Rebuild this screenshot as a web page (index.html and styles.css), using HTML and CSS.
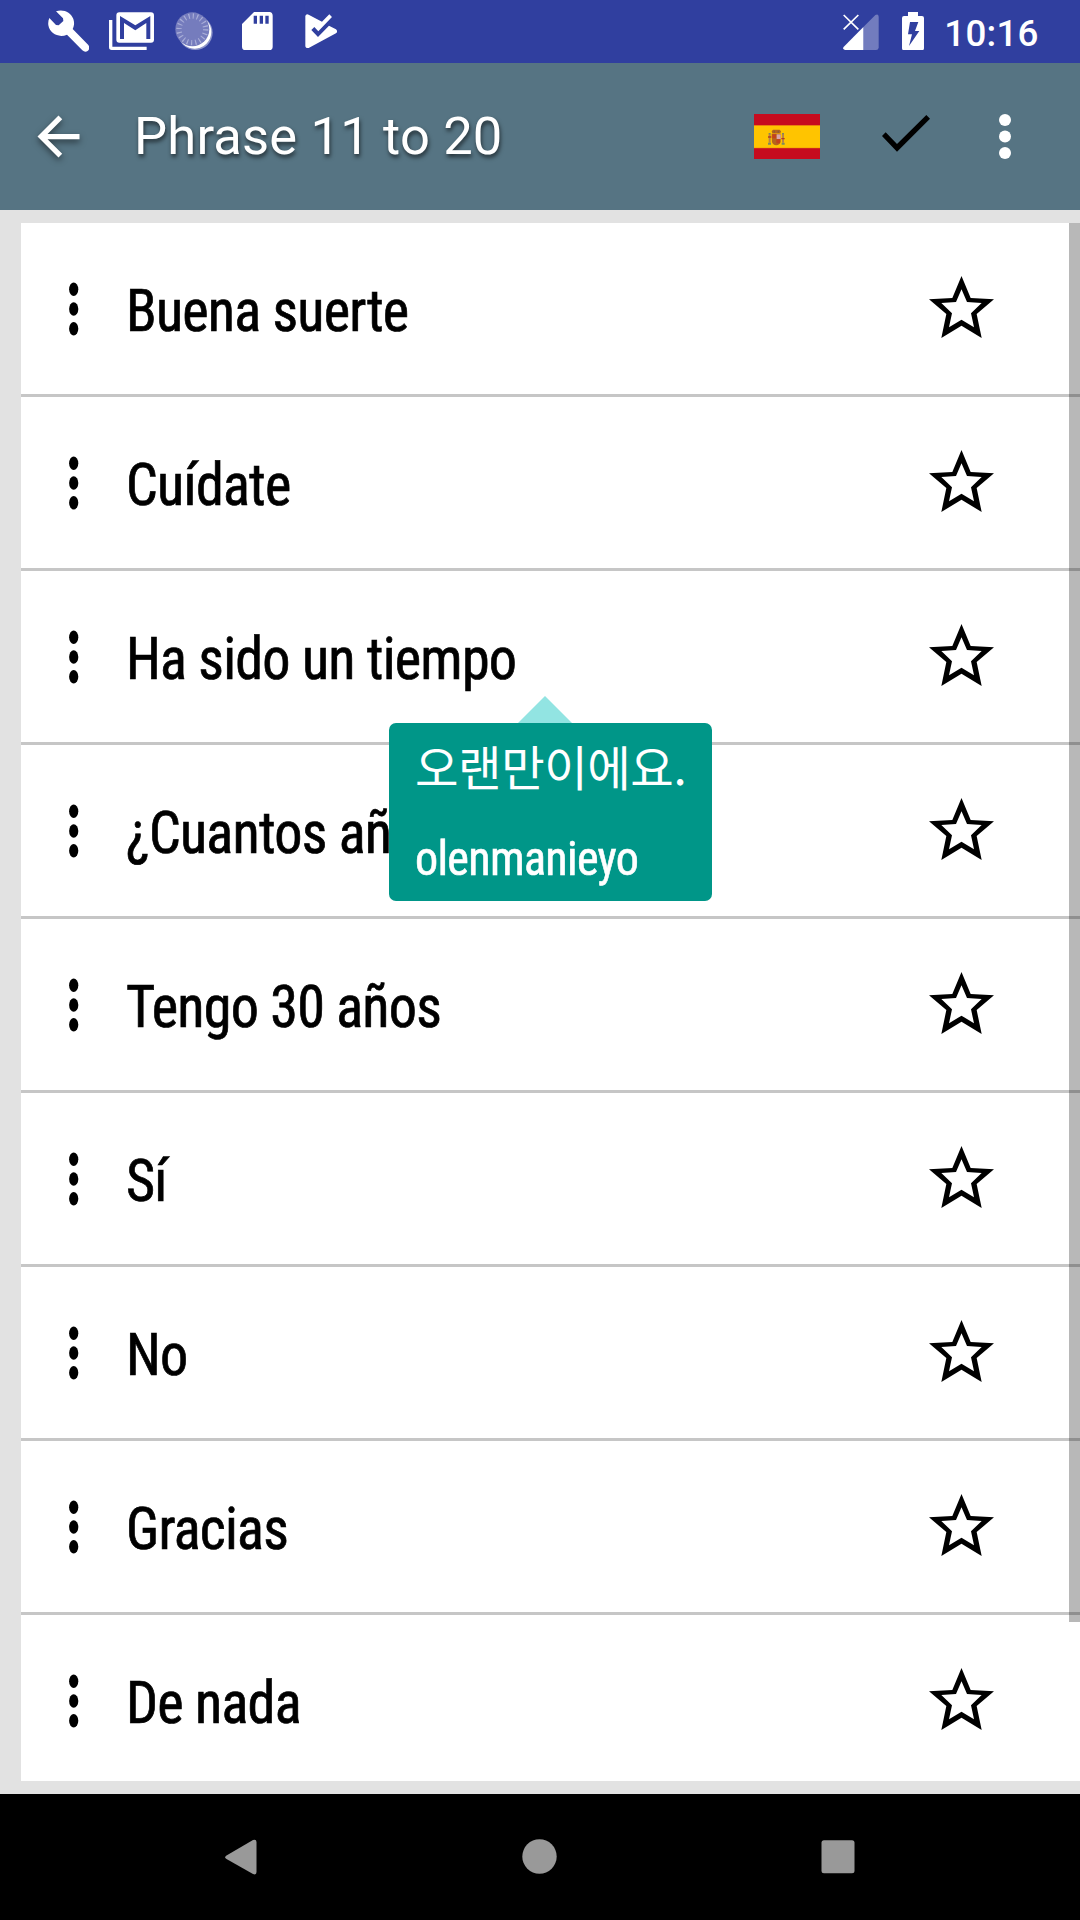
FILE: index.html
```
<!DOCTYPE html>
<html lang="es">
<head>
<meta charset="utf-8">
<title>Phrase 11 to 20</title>
<link rel="stylesheet" href="styles.css">
</head>
<body>
<svg class="defs" width="0" height="0">
  <symbol id="more" viewBox="0 0 10 54"><ellipse cx="4.7" cy="7.2" rx="4.6" ry="6.8"/><ellipse cx="4.7" cy="27" rx="4.6" ry="6.8"/><ellipse cx="4.7" cy="46.8" rx="4.6" ry="6.8"/></symbol>
  <symbol id="star" viewBox="147 108 195 186"><path fill-rule="evenodd" d="M244.500 108L272 174L342 178L290 222L305 294L244.500 257L184 294L199 222L147 178L217 174ZM244.500 148L228 186L184 189L216 220L207 262L244.500 239L282 262L273 220L305 189L261 186Z"/></symbol>
</svg>
<div class="screen">
  <header class="status">
    <svg class="wrench" viewBox="143 31 125 126"><path d="M167 35C188 27 212 38 219 58C223 70 221 79 217 88L264 136C273 149 258 163 246 152L200 105C177 115 149 104 144 77C143 68 144 61 147 55L167 76L175 77L189 64L188 56Z"/></svg>
    <svg class="mail" viewBox="327 36 135 115"><path fill-rule="evenodd" d="M358 37H453Q462 37 462 46V119Q462 128 453 128H358Q349 128 349 119V46Q349 37 358 37ZM360 48V117H372V69L406 91L439 69V117H451V48L406 76Z"/><path d="M327 60H337V140H440V150H335Q327 150 327 142Z"/></svg>
    <svg class="sync" viewBox="526 36 114 115"><circle cx="587" cy="98" r="52" opacity=".45"/><circle cx="585" cy="96" r="50"/><circle cx="578" cy="88" r="51" fill="#757cbd"/><circle cx="578" cy="88" r="40" fill="none" stroke="#a9aed8" stroke-width="16" stroke-dasharray="3.500 9.066"/></svg>
    <svg class="sd" viewBox="726 37 92 114"><path fill-rule="evenodd" d="M762 37H808Q818 38 818 48V141Q818 151 808 151H736Q726 151 726 141V73ZM761 48V72H771V48ZM779 48V72H789V48ZM796 48V72H806V48Z"/></svg>
    <svg class="play" viewBox="915 42 97 103"><path d="M916 48Q918 41 926 44L966 65L988 43L996 51L955 94L943 81L934 90L954 111L987 77L1008 88Q1015 94 1008 100L926 144Q917 146 916 139Z"/></svg>
    <span class="spring"></span>
    <svg class="signal" viewBox="71 43 107 108"><path opacity=".32" d="M132 82L168 46Q177 41 178 51V144Q177 151 170 151H132Z"/><path d="M132 82V151H77Q70 149 72 143Z"/><path fill="none" stroke="#fff" stroke-width="5" d="M73 46L117 89M117 46L73 89"/></svg>
    <svg class="battery" viewBox="246 36 66 115"><path fill-rule="evenodd" d="M264 36H294V48H306Q312 48 312 54V145Q312 151 306 151H252Q246 151 246 145V54Q246 48 252 48H264ZM270 66L264 103H276L267 138L298 93H285L295 66Z"/></svg>
    <span class="clock">10:16</span>
  </header>

  <nav class="appbar">
    <svg class="back" viewBox="0 0 24 24"><path d="M20 11H7.830l5.590-5.590L12 4l-8 8 8 8 1.410-1.410L7.830 13H20z"/></svg>
    <h1 class="title">Phrase 11 to 20</h1>
    <svg class="flag" viewBox="0 0 198 135"><path fill="#c60b1e" d="M0 0h198v135H0z"/><path fill="#ffc400" d="M0 34h198v68H0z"/><path fill="#e87b10" d="M0 33h198v2H0zM0 101h198v2H0z"/><path fill="#b5651d" d="M53 52L57 47H77L81 52L79 58H55ZM53 59H80V84Q77 93 67 94Q56 93 54 84Z"/><path fill="#c5421c" d="M55 61h11v12H55zM67 76h11v12H67z"/><path fill="#d9a6ad" d="M68 61h12v14H68z"/><path fill="#8c5a3a" d="M59 50h4v6h-4zM71 50h4v6h-4z"/><path fill="#b98345" d="M44 59h6v27h-6zM84 59h6v27h-6z"/><path fill="#b23a25" d="M42 67h10v4H42zM82 72h10v4H82z"/><path fill="#7b8a62" d="M42 86h9v6h-9zM83 86h9v6h-9zM44 57h6v4h-6zM84 57h6v4h-6z"/></svg>
    <svg class="check" viewBox="185 346 144 110"><path d="M185 409L196 398L230 433L318 346L329 357L230 456Z"/></svg>
    <svg class="overflow" viewBox="0 0 14 46"><circle cx="7" cy="6" r="6"/><circle cx="7" cy="22.500" r="6"/><circle cx="7" cy="39" r="6"/></svg>
  </nav>

  <main class="content">
    <ul class="list">
      <li class="row"><svg class="more"><use href="#more"/></svg><span class="phrase">Buena suerte</span><svg class="star"><use href="#star"/></svg></li>
      <li class="row"><svg class="more"><use href="#more"/></svg><span class="phrase">Cuídate</span><svg class="star"><use href="#star"/></svg></li>
      <li class="row"><svg class="more"><use href="#more"/></svg><span class="phrase">Ha sido un tiempo</span><svg class="star"><use href="#star"/></svg></li>
      <li class="row"><svg class="more"><use href="#more"/></svg><span class="phrase">¿Cuantos añ</span><svg class="star"><use href="#star"/></svg></li>
      <li class="row"><svg class="more"><use href="#more"/></svg><span class="phrase">Tengo 30 años</span><svg class="star"><use href="#star"/></svg></li>
      <li class="row"><svg class="more"><use href="#more"/></svg><span class="phrase">Sí</span><svg class="star"><use href="#star"/></svg></li>
      <li class="row"><svg class="more"><use href="#more"/></svg><span class="phrase">No</span><svg class="star"><use href="#star"/></svg></li>
      <li class="row"><svg class="more"><use href="#more"/></svg><span class="phrase">Gracias</span><svg class="star"><use href="#star"/></svg></li>
      <li class="row"><svg class="more"><use href="#more"/></svg><span class="phrase">De nada</span><svg class="star"><use href="#star"/></svg></li>
    </ul>
    <div class="scrollbar"></div>
    <div class="tooltip">
      <p class="korean" lang="ko">오랜만이에요.</p>
      <p class="roman">olenmanieyo</p>
    </div>
  </main>

  <footer class="navbar">
    <svg viewBox="0 0 36 36"><path d="M4.500 16.500L31 1Q34.500 0 34.500 3V33Q34.500 36.500 31 35L4.500 20Q2 18 4.500 16.500Z"/></svg>
    <svg viewBox="0 0 36 36"><circle cx="18.500" cy="17.500" r="17.200"/></svg>
    <svg viewBox="0 0 36 36"><rect x="1.500" y="1.300" width="33" height="33" rx="2.500"/></svg>
  </footer>
</div>
</body>
</html>
```
FILE: styles.css
```
* { box-sizing: border-box; margin: 0; padding: 0; }
body { width: 1080px; height: 1920px; overflow: hidden; background: #e2e2e2; font-family: Roboto, "Noto Sans CJK KR", sans-serif; }
svg { display: block; flex: none; }
.defs { position: absolute; }
.screen { display: flex; flex-direction: column; height: 1920px; }

.status { height: 63px; flex: none; display: flex; align-items: flex-start; padding: 0 42px 0 47.7px; background: #303f9f; fill: #fff; }
.wrench { width: 41.7px; height: 42px; margin-top: 10.3px; }
.mail { width: 45px; height: 38.3px; margin: 12px 0 0 19.6px; }
.sync { width: 38px; height: 38.3px; margin: 12px 0 0 21.3px; }
.sd { width: 30.7px; height: 38px; margin: 12.3px 0 0 28.7px; }
.play { width: 32.3px; height: 34.3px; margin: 14px 0 0 32.3px; }
.spring { flex: 1; }
.signal { width: 35.7px; height: 36px; margin-top: 14.3px; }
.battery { width: 22px; height: 38.3px; margin: 12px 0 0 22.7px; }
.clock { width: 93.7px; margin-left: 20.7px; line-height: 67px; font-size: 36.75px; font-weight: 500; letter-spacing: .2px; color: #fff; white-space: nowrap; }

.appbar { height: 147px; flex: none; display: flex; align-items: center; padding: 0 68px 0 27px; background: #567483; }
.back { width: 63px; height: 63px; fill: #fff; filter: drop-shadow(0 3px 3px rgba(0, 0, 0, .5)); }
.title { flex: 1; margin: 0 0 2px 44px; font-size: 52.5px; font-weight: 400; line-height: 62px; letter-spacing: .17px; color: #fff; text-shadow: 1px 3px 4px rgba(0, 0, 0, .6); white-space: nowrap; }
.flag { width: 66px; height: 45px; }
.check { width: 48px; height: 36.7px; margin: 0 0 6px 61.7px; }
.overflow { width: 14px; height: 46px; margin-left: 68px; fill: #fff; }

.content { position: relative; flex: 1; min-height: 0; padding: 13px 0 13px 21px; }
.list { height: 1558px; overflow: hidden; background: #fff; list-style: none; }
.row { display: flex; align-items: center; height: 174px; padding: 0 86px 0 48px; border-bottom: 3px solid #c6c6c6; }
.more { width: 10px; height: 54px; }
.phrase { flex: 1; margin: 4px 0 0 46.9px; font-size: 58.5px; font-weight: 400; line-height: 68px; font-stretch: 75%; letter-spacing: -.8px; -webkit-text-stroke: .7px #000; white-space: nowrap; transform: scaleX(.96); transform-origin: left; }
.star { width: 65px; height: 62px; margin-bottom: 3px; }
.scrollbar { position: absolute; top: 13px; right: 0; width: 11px; height: 1399px; background: rgba(0, 0, 0, .28); }

.tooltip { position: absolute; left: 389px; top: 513px; width: 323px; height: 178px; padding: 8px 0 0 26px; border-radius: 7px; background: #009688; color: #fff; font-size: 47.25px; white-space: nowrap; }
.tooltip::before { content: ""; position: absolute; left: 128.5px; top: -27px; border: solid transparent; border-width: 0 27px 27px; border-bottom-color: #92e4e2; }
.korean { font-family: "Noto Sans CJK KR", sans-serif; font-weight: 400; line-height: 70px; letter-spacing: -.4px; }
.roman { margin-top: 30px; line-height: 56px; font-size: 48px; font-weight: 400; font-stretch: 75%; letter-spacing: -.7px; -webkit-text-stroke: .6px #fff; transform: scaleX(.96); transform-origin: left; }

.navbar { height: 126px; flex: none; display: flex; align-items: center; justify-content: center; gap: 263px; padding-right: 2px; background: #000; fill: #999; }
.navbar svg { width: 36px; height: 36px; }
```
